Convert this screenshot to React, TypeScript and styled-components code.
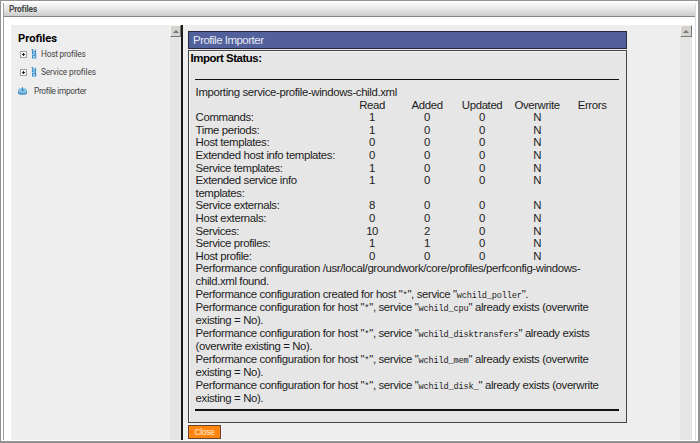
import React from "react";
import styled, { createGlobalStyle } from "styled-components";

const Global = createGlobalStyle`
  * { box-sizing: border-box; }
  body { margin: 0; background: #fff; font-family: "Liberation Sans", Arial, sans-serif; color: #1c1c22; }
`;

const Frame = styled.div`
  width: 700px;
  height: 443px;
  border: 1px solid #929292;
  border-right-width: 2px;
  border-bottom-width: 2px;
  padding: 2px 2px 1px;
  background: #fff;
  overflow: hidden;
`;

const Portlet = styled.div`
  height: 100%;
  border: 1px solid #a2a2a2;
  border-right-color: #ddd;
  border-width: 0 1px;
  display: flex;
  flex-direction: column;
`;

const TitleBar = styled.header`
  height: 14px;
  flex: none;
  border-bottom: 1px solid #858585;
  border-radius: 3px 3px 0 0;
  background: linear-gradient(#f7f7f7, #e6e6e6 50%, #cbcbcb);
  padding-left: 5px;
  font: bold 8.3px/13px Roboto, sans-serif;
  letter-spacing: -0.12px;
  color: #454545;
`;

const Content = styled.div`
  flex: 1;
  min-height: 0;
  display: flex;
  margin: 8px 3px 0 7px;
  background: #eee;
`;

const Sidebar = styled.nav`
  width: 159px;
  flex: none;
  padding: 7px 0 0 7px;
`;

const SideTitle = styled.h1`
  margin: 0;
  font: bold 11.2px/14px Roboto, sans-serif;
  letter-spacing: 0;
  color: #000;
`;

const TreeRow = styled.div<{ $gap?: number; $root?: boolean }>`
  display: flex;
  align-items: center;
  height: 12px;
  margin-top: ${(p) => p.$gap ?? 0}px;
  padding-left: ${(p) => (p.$root ? 0 : 2)}px;
  font: 8.3px/12px Roboto, sans-serif;
  color: #444;
  white-space: nowrap;
`;

const TreeLabel = styled.span<{ $left: number; $space: number }>`
  margin-left: ${(p) => p.$left}px;
  letter-spacing: ${(p) => p.$space}px;
`;

const Scrollbar = styled.div<{ $width: number }>`
  width: ${(p) => p.$width}px;
  flex: none;
  background: #e5e5e5;
`;

const ScrollButton = styled.div`
  width: 100%;
  height: 12px;
  border: 1px solid;
  border-color: #f4f4f4 #777 #777 #f4f4f4;
  background: #d6d3ce;
  display: flex;
  align-items: center;
  justify-content: center;
`;

const Divider = styled.div`
  width: 2px;
  flex: none;
  background: #1c1c1c;
`;

const Main = styled.main`
  flex: 1;
  padding: 6px 0 0 5px;
`;

const PanelTitle = styled.div`
  width: 439px;
  height: 18px;
  border: 1px solid #25293b;
  background: #52609c;
  color: #e8eaf3;
  padding-left: 4px;
  font-size: 11.5px;
  line-height: 17px;
  letter-spacing: -0.51px;
`;

const Panel = styled.section`
  width: 439px;
  height: 373px;
  margin-top: 1px;
  border: 1px solid #3f4540;
  background: #e6e6e6;
  box-shadow: inset 1px 1px #f6f6f6;
`;

const PanelHeading = styled.h2`
  margin: 0;
  padding-left: 1.5px;
  height: 28px;
  font-size: 11.4px;
  line-height: 15px;
  letter-spacing: -0.44px;
  color: #000;
`;

const Report = styled.div`
  width: 424px;
  margin-left: 6px;
  border: solid #111;
  border-width: 1.5px 0 2px;
  height: 332px;
  padding: 6px 0 0 0.6px;
  font-size: 11.4px;
  letter-spacing: -0.37px;
`;

const Intro = styled.div`
  height: 12.6px;
  line-height: 13px;
  white-space: nowrap;
`;

const Table = styled.div`
  display: grid;
  grid-template-columns: 149px repeat(5, 55px);
  line-height: 12.6px;
`;

const Cell = styled.div<{ $label?: boolean }>`
  text-align: ${(p) => (p.$label ? "left" : "center")};
  white-space: pre;
`;

const Line = styled.div`
  height: 13px;
  line-height: 13px;
  white-space: nowrap;
`;

const Code = styled.code`
  font: 8.6px/10px "Liberation Mono", monospace;
  letter-spacing: -0.16px;
`;

const CloseButton = styled.button`
  display: block;
  width: 33px;
  height: 14px;
  margin: 2px 0 0;
  padding: 0;
  border: 1px solid #6b4630;
  background: #ff8410;
  color: #fff0d8;
  font: 8.4px/12px "Liberation Sans", sans-serif;
  letter-spacing: -0.25px;
`;

const PlusBox = () => (
  <svg width="7" height="7" viewBox="0 0 7 7">
    <rect x="0.5" y="0.5" width="6" height="6" fill="#f5f5f5" stroke="#a2a2a2" />
    <path d="M2 3.5h3M3.5 2v3" stroke="#222" />
  </svg>
);

const IconBox = styled.svg`
  margin-left: 4px;
`;

const ProfileIcon = () => (
  <IconBox width="6" height="10" viewBox="0 0 6 10" fill="none">
    <path d="M.5.6h1.3v2.3h2.7V.8M1.5 2.9v2h3v-2M4.5 4.9v1.7H1.6V9h3.1V6.6" stroke="#3d90ca" strokeWidth="1.2" />
    <path d="M2.2 3.9h1.6M2.2 7.9h1.6M1.5 5.7h2" stroke="#9bcfeb" />
  </IconBox>
);

const ImportIcon = () => (
  <svg width="9" height="8" viewBox="0 0 9 8">
    <path d="M0 3h9v2.9C9 8.4 0 8.4 0 5.9z" fill="#3b86bd" />
    <ellipse cx="4.5" cy="3.2" rx="4.4" ry="2.3" fill="#8cc5e6" />
    <path d="M4.5 0v3.6M3 2.6l1.5 1.3L6 2.6" stroke="#3a84ba" strokeWidth=".9" fill="none" />
    <path d="M1.2 5.4c2 1 4.6 1 6.6 0" stroke="#a9d5ed" strokeWidth=".7" fill="none" />
  </svg>
);

const ScrollUp = ({ width }: { width: number }) => (
  <Scrollbar $width={width}>
    <ScrollButton>
      <svg width="6" height="3" viewBox="0 0 6 3"><path d="M0 3 3 0l3 3z" fill="#777" /></svg>
    </ScrollButton>
  </Scrollbar>
);

const rows = [
  ["Commands:", "1", "0", "0", "N"],
  ["Time periods:", "1", "0", "0", "N"],
  ["Host templates:", "0", "0", "0", "N"],
  ["Extended host info templates:", "0", "0", "0", "N"],
  ["Service templates:", "1", "0", "0", "N"],
  ["Extended service info\ntemplates:", "1", "0", "0", "N"],
  ["Service externals:", "8", "0", "0", "N"],
  ["Host externals:", "0", "0", "0", "N"],
  ["Services:", "10", "2", "0", "N"],
  ["Service profiles:", "1", "1", "0", "N"],
  ["Host profile:", "0", "0", "0", "N"],
];

const existing = [
  ["wchild_cpu", " already exists (overwrite", "existing = No)."],
  ["wchild_disktransfers", " already exists", "(overwrite existing = No)."],
  ["wchild_mem", " already exists (overwrite", "existing = No)."],
  ["wchild_disk_", " already exists (overwrite", "existing = No)."],
];

export default function App() {
  return (
    <Frame>
      <Global />
      <Portlet>
        <TitleBar>Profiles</TitleBar>
        <Content>
          <Sidebar>
            <SideTitle>Profiles</SideTitle>
            <TreeRow $gap={2}>
              <PlusBox /><ProfileIcon /><TreeLabel $left={4} $space={-0.22}>Host profiles</TreeLabel>
            </TreeRow>
            <TreeRow $gap={6}>
              <PlusBox /><ProfileIcon /><TreeLabel $left={4} $space={-0.12}>Service profiles</TreeLabel>
            </TreeRow>
            <TreeRow $gap={7} $root>
              <ImportIcon /><TreeLabel $left={7} $space={-0.34}>Profile importer</TreeLabel>
            </TreeRow>
          </Sidebar>
          <ScrollUp width={11} />
          <Divider />
          <Main>
            <PanelTitle>Profile Importer</PanelTitle>
            <Panel>
              <PanelHeading>Import Status:</PanelHeading>
              <Report>
                <Intro>Importing service-profile-windows-child.xml</Intro>
                <Table>
                  <Cell $label />
                  {["Read", "Added", "Updated", "Overwrite", "Errors"].map((h) => <Cell key={h}>{h}</Cell>)}
                  {rows.map(([label, ...values]) => (
                    <React.Fragment key={label}>
                      <Cell $label>{label}</Cell>
                      {values.map((v, i) => <Cell key={i}>{v}</Cell>)}
                      <Cell />
                    </React.Fragment>
                  ))}
                </Table>
                <Line>Performance configuration /usr/local/groundwork/core/profiles/perfconfig-windows-</Line>
                <Line>child.xml found.</Line>
                <Line>Performance configuration created for host "<Code>*</Code>", service "<Code>wchild_poller</Code>".</Line>
                {existing.map(([name, tail, next]) => (
                  <React.Fragment key={name}>
                    <Line>Performance configuration for host "<Code>*</Code>", service "<Code>{name}</Code>"{tail}</Line>
                    <Line>{next}</Line>
                  </React.Fragment>
                ))}
              </Report>
            </Panel>
            <CloseButton>Close</CloseButton>
          </Main>
          <ScrollUp width={12} />
        </Content>
      </Portlet>
    </Frame>
  );
}
